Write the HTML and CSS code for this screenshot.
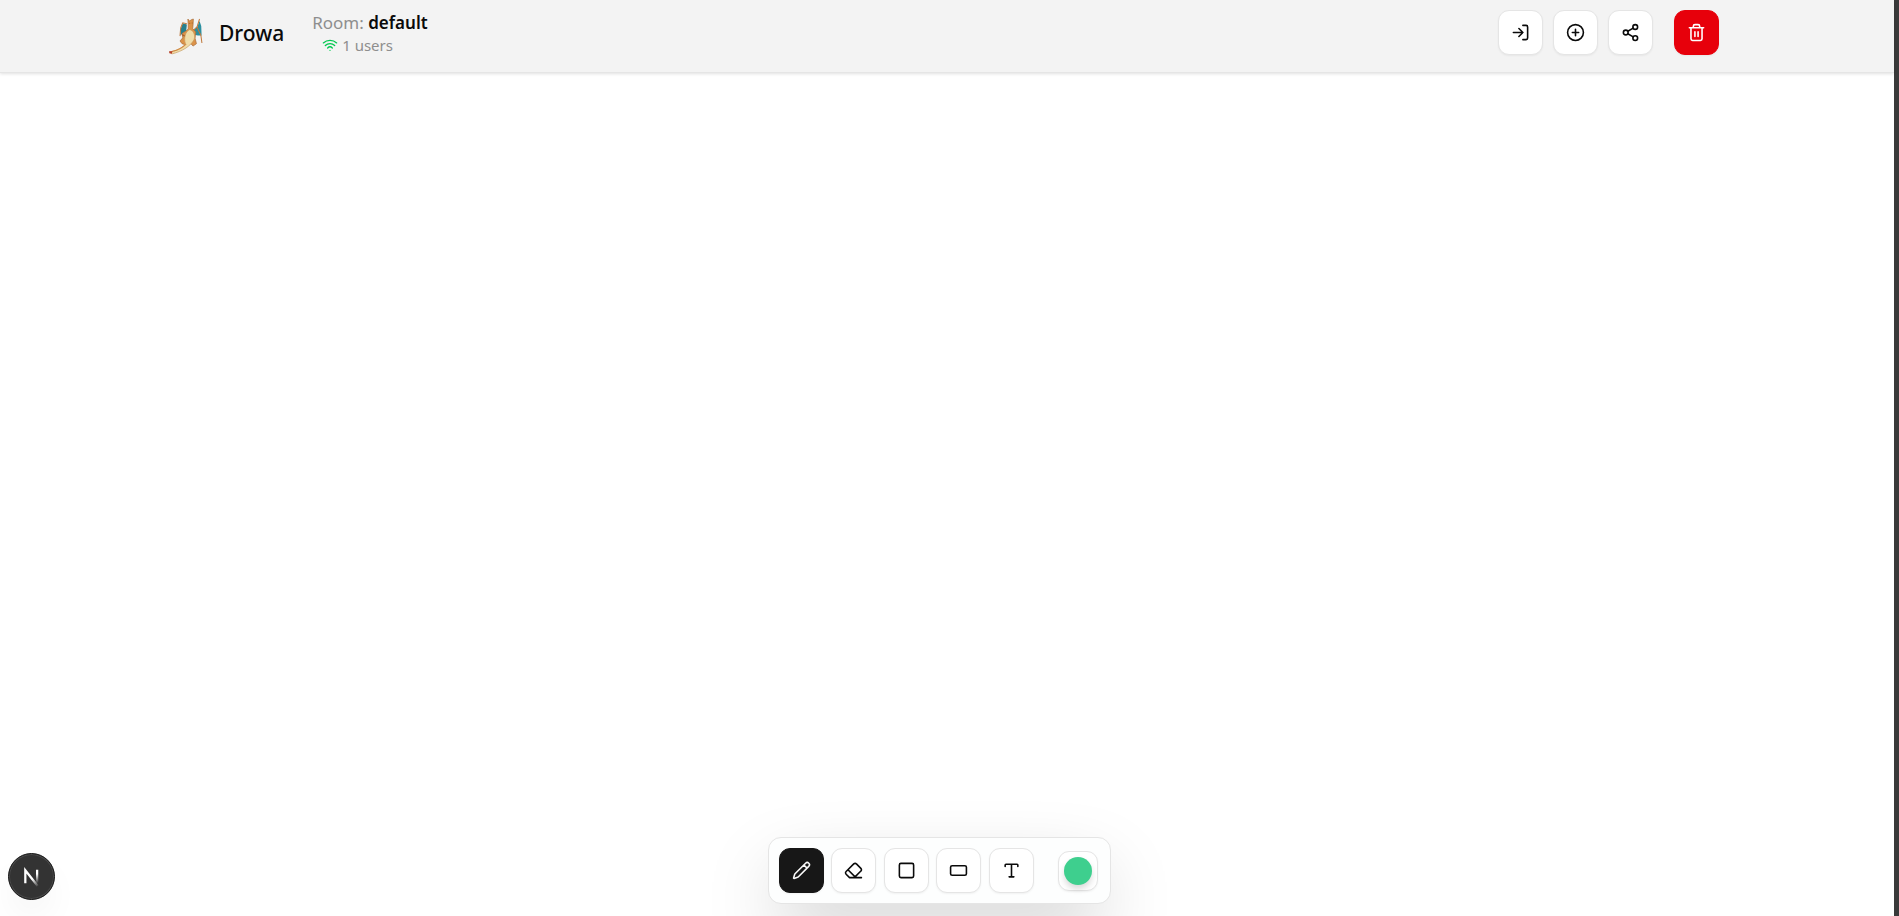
FILE: index.html
```html
<!doctype html>
<html lang="en">
<head>
<meta charset="utf-8">
<meta name="viewport" content="width=device-width, initial-scale=1">
<title>Drowa</title>
<link rel="stylesheet" href="styles.css">
</head>

<body>
<div class="app">
	<header class="topbar">
		<div class="topbar-inner">
			<a class="brand" href="#">
				<svg class="brand-logo" viewBox="28 33 99 108" aria-hidden="true">
					<!-- wings -->
					<path fill="#257f8e" d="M80 52 L68 48 L63 62 L61 84 L70 76 L78 72 Z"/>
					<path fill="#2b8fa0" d="M98 68 L110 60 L117 42 L122 56 L123 84 L112 84 L102 82 Z"/>
					<path fill="none" stroke="#c07a3e" stroke-width="3" d="M80 50 L68 47 L62 62 L60 86 M100 68 L110 58 L117 36 M110 60 L121 84 L124 106"/>
					<!-- body, arms and feet -->
					<path fill="#dc9349" stroke="#a86c38" stroke-width="2" d="M83 36 L88 42 L93 38 L99 36 L98 54 L97 64 L106 74 L104 92 L108 108 L98 115 L92 108 L78 112 L66 108 L60 100 L68 91 L66 78 L76 72 L84 65 L84 54 Z"/>
					<path fill="#a8622e" d="M86 47h4v3h-4zM94 46h3v3h-3zM66 80l10 4-2 4-8-4z"/>
					<!-- belly and tail -->
					<path fill="#f0dda9" stroke="#c79d60" stroke-width="2" d="M88 67 C98 68 106 82 101 96 C92 114 68 130 36 138 L30 132 C54 128 68 120 76 108 C70 92 76 72 88 67 Z"/>
					<path fill="none" stroke="#d28a43" stroke-width="3" d="M78 109 C66 121 50 127 36 131"/>
					<path fill="#b8402a" d="M28 130 L38 130 L36 137 L29 136 Z"/>
				</svg>
				<span class="brand-name">Drowa</span>
			</a>
			<div class="room">
				<div class="room-name">Room: <strong>default</strong></div>
				<div class="room-users">
					<svg class="room-wifi" viewBox="0 0 24 24"><path d="M12 20h.01M2 8.82a15 15 0 0 1 20 0M5 12.86a10 10 0 0 1 14 0M8.5 16.43a5 5 0 0 1 7 0"/></svg>
					<span>1 users</span>
				</div>
			</div>
			<div class="actions">
				<button class="btn" type="button" aria-label="Join room">
					<svg class="icon" viewBox="0 0 24 24"><path d="M15 3h4a2 2 0 0 1 2 2v14a2 2 0 0 1-2 2h-4M10 17l5-5-5-5M15 12H3"/></svg>
				</button>
				<button class="btn" type="button" aria-label="New room">
					<svg class="icon" viewBox="0 0 24 24"><circle cx="12" cy="12" r="10"/><path d="M8 12h8M12 8v8"/></svg>
				</button>
				<button class="btn" type="button" aria-label="Share">
					<svg class="icon" viewBox="0 0 24 24"><circle cx="18" cy="5" r="3"/><circle cx="6" cy="12" r="3"/><circle cx="18" cy="19" r="3"/><path d="M8.59 13.51l6.83 3.98M15.41 6.51l-6.82 3.98"/></svg>
				</button>
				<button class="btn btn-danger" type="button" aria-label="Clear board">
					<svg class="icon" viewBox="0 0 24 24"><path d="M3 6h18M19 6v14a2 2 0 0 1-2 2H7a2 2 0 0 1-2-2V6M8 6V4a2 2 0 0 1 2-2h4a2 2 0 0 1 2 2v2M10 11v6M14 11v6"/></svg>
				</button>
			</div>
		</div>
	</header>

	<main class="board">
		<div class="toolbar">
			<div class="tools">
				<button class="btn btn-active" type="button" aria-label="Pencil">
					<svg class="icon" viewBox="0 0 24 24"><path d="M21.17 6.81a1 1 0 0 0-3.98-3.98L3.84 16.17a2 2 0 0 0-.5.83l-1.32 4.35a.5.5 0 0 0 .62.62l4.35-1.32a2 2 0 0 0 .83-.5zM15 5l4 4"/></svg>
				</button>
				<button class="btn" type="button" aria-label="Eraser">
					<svg class="icon" viewBox="0 0 24 24"><path d="M7 21l-4.3-4.3c-1-1-1-2.5 0-3.4l9.6-9.6c1-1 2.5-1 3.4 0l5.6 5.6c1 1 1 2.5 0 3.4L13 21M22 21H7M5 11l9 9"/></svg>
				</button>
				<button class="btn" type="button" aria-label="Square">
					<svg class="icon" viewBox="0 0 24 24"><rect x="3" y="3" width="18" height="18" rx="2"/></svg>
				</button>
				<button class="btn" type="button" aria-label="Rectangle">
					<svg class="icon" viewBox="0 0 24 24"><rect x="2" y="6" width="20" height="12" rx="2"/></svg>
				</button>
				<button class="btn" type="button" aria-label="Text">
					<svg class="icon" viewBox="0 0 24 24"><path d="M12 4v16M4 7V5a1 1 0 0 1 1-1h14a1 1 0 0 1 1 1v2M9 20h6"/></svg>
				</button>
			</div>
			<button class="swatch" type="button" aria-label="Color"><span class="swatch-dot"></span></button>
		</div>
	</main>

	<button class="devtools" type="button" aria-label="Dev tools">
		<svg class="devtools-mark" viewBox="0 0 40 40">
			<defs>
				<linearGradient id="fade-side" x1="0" y1="0" x2="0" y2="1"><stop offset="0.3" stop-color="#fff"/><stop offset="1" stop-color="#fff" stop-opacity="0"/></linearGradient>
				<linearGradient id="fade-slant" gradientUnits="userSpaceOnUse" x1="21" y1="22" x2="26" y2="29"><stop offset="0" stop-color="#fff"/><stop offset="1" stop-color="#fff" stop-opacity="0"/></linearGradient>
			</defs>
			<path fill="none" stroke="url(#fade-slant)" stroke-width="2" d="M14.5 26V14.5L25.5 28.5"/>
			<rect x="24" y="14" width="2" height="12" fill="url(#fade-side)"/>
		</svg>
	</button>
</div>
</body>
</html>
```
FILE: styles.css
```css
* { box-sizing: border-box; }
body { margin: 0; background-color: #fff; color: #0a0a0a; font: 17px/22px "Noto Sans", "Open Sans", sans-serif; }
button { margin: 0; padding: 0; font: inherit; cursor: pointer; }

.app { display: flex; flex-direction: column; min-height: 100vh; border-right: 5px solid #3a3a3a; }

/* top bar */
.topbar { padding: 10px 16px 16px 0; border-bottom: 1px solid #e5e5e5; background-color: #f3f3f3; box-shadow: 0 1px 3px rgba(0, 0, 0, .12); }
.topbar-inner { display: flex; align-items: center; max-width: 1560px; margin: 0 auto; padding-left: 10px; }
.brand { display: flex; align-items: center; gap: 16px; color: inherit; text-decoration: none; }
.brand-logo { width: 34px; height: 37px; margin-top: 6px; }
.brand-name { font-size: 21px; font-weight: 500; }
.room { margin-left: 28px; padding-top: 2px; color: #8e8e8e; }
.room-name strong { color: #0a0a0a; font-weight: 600; }
.room-users { display: flex; align-items: center; gap: 4px; padding-left: 10px; font-size: 15px; }
.room-wifi { width: 16px; height: 16px; fill: none; stroke: #00c950; stroke-width: 2; stroke-linecap: round; stroke-linejoin: round; }
.actions { display: flex; align-self: flex-start; gap: 10px; margin-left: auto; }

/* buttons */
.btn { display: flex; align-items: center; justify-content: center; width: 45px; height: 45px; border: 1px solid #e5e5e5; border-radius: 11px; background-color: #fff; color: #0a0a0a; box-shadow: 0 1px 2px rgba(0, 0, 0, .05); }
.btn:hover { background-color: #f5f5f5; }
.btn-active, .btn-active:hover { border-color: #171717; background-color: #171717; color: #fafafa; }
.btn-danger, .btn-danger:hover { margin-left: 11px; border-color: #e7000b; background-color: #e7000b; color: #fff; }
.icon { width: 19px; height: 19px; fill: none; stroke: currentColor; stroke-width: 2; stroke-linecap: round; stroke-linejoin: round; }

/* drawing board */
.board { display: flex; flex: 1; align-items: flex-end; justify-content: center; padding: 0 16px 12px 0; overflow: hidden; }
.toolbar { display: flex; align-items: center; gap: 24px; padding: 10px 12px 10px 10px; border: 1px solid #e5e5e5; border-radius: 13px; background-color: #fdfefe; box-shadow: 0 28px 72px -12px rgba(0, 0, 0, .25); }
.tools { display: flex; justify-content: space-between; width: 255px; }
.swatch { display: flex; align-items: center; justify-content: center; width: 40px; height: 40px; border: 1px solid #e5e5e5; border-radius: 11px; background-color: #fff; box-shadow: 0 1px 2px rgba(0, 0, 0, .05); }
.swatch-dot { width: 28px; height: 28px; border-radius: 50%; background-color: #3ecf8e; box-shadow: 0 4px 6px rgba(0, 0, 0, .15); }

/* floating badge in the corner */
.devtools { position: fixed; left: 8px; bottom: 16px; width: 47px; height: 47px; border: 1px solid #171717; border-radius: 50%; background-color: #333; box-shadow: inset 0 0 0 1px #4a4a4a, 0 18px 36px -8px rgba(0, 0, 0, .08); }
.devtools-mark { display: block; width: 45px; height: 45px; }
```
